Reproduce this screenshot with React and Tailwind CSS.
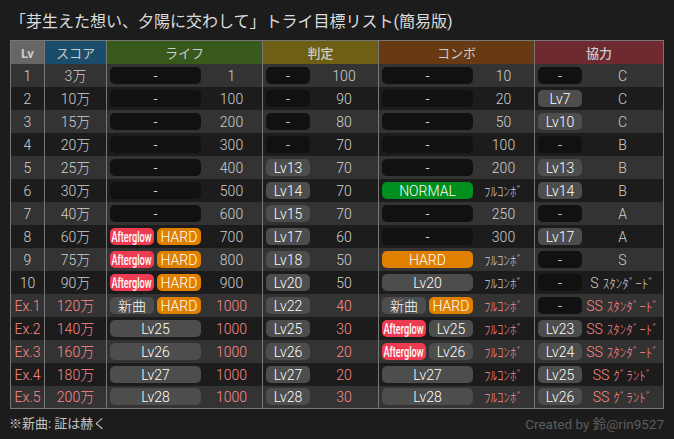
import React from 'react';

const font = 'font-["Roboto","Noto_Sans_CJK_JP",sans-serif]';

const rows = [
    { lv: '1', score: '3万', life: ['-'], lifeVal: '1', judge: '-', judgeVal: '100', combo: ['-'], comboVal: '10', coop: '-', grade: 'C' },
    { lv: '2', score: '10万', life: ['-'], lifeVal: '100', judge: '-', judgeVal: '90', combo: ['-'], comboVal: '20', coop: 'Lv7', grade: 'C' },
    { lv: '3', score: '15万', life: ['-'], lifeVal: '200', judge: '-', judgeVal: '80', combo: ['-'], comboVal: '50', coop: 'Lv10', grade: 'C' },
    { lv: '4', score: '20万', life: ['-'], lifeVal: '300', judge: '-', judgeVal: '70', combo: ['-'], comboVal: '100', coop: '-', grade: 'B' },
    { lv: '5', score: '25万', life: ['-'], lifeVal: '400', judge: 'Lv13', judgeVal: '70', combo: ['-'], comboVal: '200', coop: 'Lv13', grade: 'B' },
    { lv: '6', score: '30万', life: ['-'], lifeVal: '500', judge: 'Lv14', judgeVal: '70', combo: ['NORMAL'], comboVal: 'ﾌﾙｺﾝﾎﾞ', coop: 'Lv14', grade: 'B' },
    { lv: '7', score: '40万', life: ['-'], lifeVal: '600', judge: 'Lv15', judgeVal: '70', combo: ['-'], comboVal: '250', coop: '-', grade: 'A' },
    { lv: '8', score: '60万', life: ['Afterglow', 'HARD'], lifeVal: '700', judge: 'Lv17', judgeVal: '60', combo: ['-'], comboVal: '300', coop: 'Lv17', grade: 'A' },
    { lv: '9', score: '75万', life: ['Afterglow', 'HARD'], lifeVal: '800', judge: 'Lv18', judgeVal: '50', combo: ['HARD'], comboVal: 'ﾌﾙｺﾝﾎﾞ', coop: '-', grade: 'S' },
    { lv: '10', score: '90万', life: ['Afterglow', 'HARD'], lifeVal: '900', judge: 'Lv20', judgeVal: '50', combo: ['Lv20'], comboVal: 'ﾌﾙｺﾝﾎﾞ', coop: '-', grade: 'S', gradeSub: 'ｽﾀﾝﾀﾞｰﾄﾞ' },
    { ex: true, lv: 'Ex.1', score: '120万', life: ['新曲', 'HARD'], lifeVal: '1000', judge: 'Lv22', judgeVal: '40', combo: ['新曲', 'HARD'], comboVal: 'ﾌﾙｺﾝﾎﾞ', coop: '-', grade: 'SS', gradeSub: 'ｽﾀﾝﾀﾞｰﾄﾞ' },
    { ex: true, lv: 'Ex.2', score: '140万', life: ['Lv25'], lifeVal: '1000', judge: 'Lv25', judgeVal: '30', combo: ['Afterglow', 'Lv25'], comboVal: 'ﾌﾙｺﾝﾎﾞ', coop: 'Lv23', grade: 'SS', gradeSub: 'ｽﾀﾝﾀﾞｰﾄﾞ' },
    { ex: true, lv: 'Ex.3', score: '160万', life: ['Lv26'], lifeVal: '1000', judge: 'Lv26', judgeVal: '20', combo: ['Afterglow', 'Lv26'], comboVal: 'ﾌﾙｺﾝﾎﾞ', coop: 'Lv24', grade: 'SS', gradeSub: 'ｽﾀﾝﾀﾞｰﾄﾞ' },
    { ex: true, lv: 'Ex.4', score: '180万', life: ['Lv27'], lifeVal: '1000', judge: 'Lv27', judgeVal: '20', combo: ['Lv27'], comboVal: 'ﾌﾙｺﾝﾎﾞ', coop: 'Lv25', grade: 'SS', gradeSub: 'ｸﾞﾗﾝﾄﾞ' },
    { ex: true, lv: 'Ex.5', score: '200万', life: ['Lv28'], lifeVal: '1000', judge: 'Lv28', judgeVal: '30', combo: ['Lv28'], comboVal: 'ﾌﾙｺﾝﾎﾞ', coop: 'Lv26', grade: 'SS', gradeSub: 'ｸﾞﾗﾝﾄﾞ' },
];

const pillColor = (t) => {
    if (t === '-') return 'bg-[#111111] text-white';
    if (t === 'Afterglow') return 'bg-[#ee3b52] text-white';
    if (t === 'HARD') return 'bg-[#df8000] text-white';
    if (t === 'NORMAL') return 'bg-[#008f1f] text-white';
    return 'bg-[#4d4d4d] text-white';
};

const Pill = ({ text, w }) => (
    <span className={`flex h-[17px] items-center justify-center rounded-[5px] pt-px text-[14px] leading-none font-light ${w} ${pillColor(text)}`}>
        {text === 'Afterglow' ? <span className="inline-block scale-x-[0.66] font-medium whitespace-nowrap">{text}</span> : text}
    </span>
);

const Pills = ({ items }) => (
    <div className="flex w-[91px] shrink-0 gap-[3px]">
        {items.map((t, i) => (
            <Pill key={i} text={t} w={items.length > 1 ? 'w-[44px] shrink-0' : 'w-[91px]'} />
        ))}
    </div>
);

const Sub = ({ children }) => (
    <span className="inline-block text-[13px] leading-none whitespace-nowrap">{children}</span>
);

const Val = ({ children }) => (
    <span className="flex-1 pt-px text-center whitespace-nowrap">{children}</span>
);

const heads = [
    { name: 'Lv', cls: 'w-[34px] bg-[#666666] font-bold' },
    { name: 'スコア', cls: 'w-[62px] bg-[#1a4d6b] font-normal' },
    { name: 'ライフ', cls: 'w-[156px] bg-[#38591c] font-normal' },
    { name: '判定', cls: 'w-[116px] bg-[#6e5f14] font-medium' },
    { name: 'コンボ', cls: 'w-[156px] bg-[#683a14] font-normal' },
    { name: '協力', cls: 'w-[129px] bg-[#6e2a30] font-medium' },
];

const App = () => (
    <div className={`h-[439px] w-[674px] overflow-hidden bg-[#1c1c1c] text-[#cccccc] ${font}`}>
        <h1 className="h-[40px] pt-[10px] pl-[10px] text-[16px] leading-[24px] font-normal text-[#dddddd] whitespace-nowrap">
            「芽生えた想い、夕陽に交わして」トライ目標リスト(簡易版)
        </h1>
        <table className="ml-[10px] w-[654px] table-fixed border-collapse border border-[#777777] text-[14px] font-light">
            <thead>
                <tr className="h-[23px]">
                    {heads.map((h) => (
                        <th key={h.name} className={`border-x border-[#777777] p-0 pt-[2px] text-[13px] leading-none text-[#cccccc] ${h.cls}`}>{h.name}</th>
                    ))}
                </tr>
            </thead>
            <tbody>
                {rows.map((r, i) => {
                    const tone = r.ex ? 'text-[#ff8a8a]' : 'text-[#d0d0d0]';
                    return (
                        <tr key={r.lv} className={`h-[23px] ${i % 2 === 0 ? 'bg-[#333333]' : 'bg-[#1c1c1c]'} ${tone}`}>
                            <td className="border-x border-[#777777] p-0 pt-px text-center leading-none">{r.lv}</td>
                            <td className="border-x border-[#777777] p-0 pt-px text-center leading-none">{r.score}</td>
                            <td className="border-x border-[#777777] p-0 leading-none">
                                <div className="flex items-center pl-[3px]">
                                    <Pills items={r.life} />
                                    <Val>{r.lifeVal}</Val>
                                </div>
                            </td>
                            <td className="border-x border-[#777777] p-0 leading-none">
                                <div className="flex items-center pl-[3px]">
                                    <Pill text={r.judge} w="w-[44px] shrink-0" />
                                    <Val>{r.judgeVal}</Val>
                                </div>
                            </td>
                            <td className="border-x border-[#777777] p-0 leading-none">
                                <div className="flex items-center pl-[3px]">
                                    <Pills items={r.combo} />
                                    <Val>{r.comboVal.length > 4 ? <Sub>{r.comboVal}</Sub> : r.comboVal}</Val>
                                </div>
                            </td>
                            <td className="border-x border-[#777777] p-0 leading-none">
                                <div className="flex items-center pl-[3px]">
                                    <Pill text={r.coop} w="w-[44px] shrink-0" />
                                    <Val>
                                        {r.grade}
                                        {r.gradeSub && <span className="ml-[4px]"><Sub>{r.gradeSub}</Sub></span>}
                                    </Val>
                                </div>
                            </td>
                        </tr>
                    );
                })}
            </tbody>
        </table>
        <div className="flex items-center justify-between pt-[6px] pr-[10px] pl-[9px] text-[13px] leading-[18px]">
            <span className="text-[#c4c4c4]">※新曲: 証は赫く</span>
            <span className="text-[13.5px] text-[#5c5c5c]">Created by 鈴@rin9527</span>
        </div>
    </div>
);

export default App;
